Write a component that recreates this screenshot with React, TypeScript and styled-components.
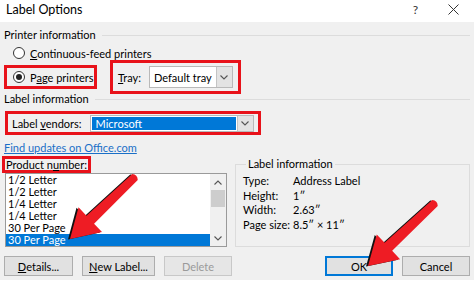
import styled, { createGlobalStyle } from "styled-components";

const GlobalStyle = createGlobalStyle`
  body {
    margin: 0;
    background: #fff;
    font-family: Lato, "Noto Sans", sans-serif;
    font-size: 11px;
    color: #000;
  }
`;

const products = [
  "1/2 Letter",
  "1/2 Letter",
  "1/4 Letter",
  "1/4 Letter",
  "30 Per Page",
  "30 Per Page",
];

const details = [
  ["Type:", "Address Label"],
  ["Height:", "1\u02BA"],
  ["Width:", "2.63\u02BA"],
  ["Page size:", "8.5\u02BA \u00D7 11\u02BA"],
];

// arrow drawn pointing right from the tail, then rotated into place
const arrowShape = (len: number) => {
  const h = 28;
  const w = 17;
  return `M0 -4 Q-3.5 0 0 4 L${len - h} 5.5 L${len - h} ${w} L${len} 0 L${len - h} ${-w} L${len - h} -5.5 Z`;
};

const Arrow = ({ x, y, tx, ty }: { x: number; y: number; tx: number; ty: number }) => {
  const len = Math.hypot(tx - x, ty - y);
  const angle = (Math.atan2(ty - y, tx - x) * 180) / Math.PI;
  const d = arrowShape(len);
  return (
    <g>
      <g transform="translate(-2 0.5)">
        <path d={d} fill="#111" transform={`translate(${x} ${y}) rotate(${angle})`} />
      </g>
      <path d={d} fill="#ee1c24" transform={`translate(${x} ${y}) rotate(${angle})`} />
    </g>
  );
};

const Chevron = ({ up }: { up?: boolean }) => (
  <svg width="8" height="5" viewBox="0 0 8 5">
    <polyline
      points={up ? "0.5,4.5 4,1 7.5,4.5" : "0.5,0.5 4,4 7.5,0.5"}
      fill="none"
      stroke="#555"
      strokeWidth="1.1"
    />
  </svg>
);

const App = () => {
  return (
    <Window>
      <GlobalStyle />
      <TitleBar>
        <Title>Label Options</Title>
        <TitleButtons>
          <Help>?</Help>
          <svg width="11" height="11" viewBox="0 0 11 11">
            <path d="M0.5 0.5 L10.5 10.5 M10.5 0.5 L0.5 10.5" stroke="#333" strokeWidth="1" />
          </svg>
        </TitleButtons>
      </TitleBar>

      <Body>
        <SectionHead>
          <span>Printer information</span>
          <Rule />
        </SectionHead>
        <RadioRow>
          <Radio />
          <span>
            <u>C</u>ontinuous-feed printers
          </span>
        </RadioRow>
        <PrinterRow>
          <RedBox $pad="0 6px" $height={24} $width={93}>
            <Radio $checked />
            <span>
              P<u>a</u>ge printers
            </span>
          </RedBox>
          <RedBox $pad="0 5px" $height={34} $gap={8}>
            <span>
              <u>T</u>ray:
            </span>
            <Select $width={84} $height={22}>
              <SelectText>Default tray</SelectText>
              <DropButton>
                <Chevron />
              </DropButton>
            </Select>
          </RedBox>
        </PrinterRow>

        <SectionHead $tight>
          <span>Label information</span>
          <Rule />
        </SectionHead>
        <VendorRow>
          <RedBox $pad="0 4px" $height={24} $gap={8}>
            <span>
              Label <u>v</u>endors:
            </span>
            <Select $width={164} $height={17}>
              <SelectText $selected>Microsoft</SelectText>
              <DropButton>
                <Chevron />
              </DropButton>
            </Select>
          </RedBox>
        </VendorRow>

        <Link>Find updates on Office.com</Link>

        <Lower>
          <div>
            <ProductLabel>
              Product n<u>u</u>mber:
            </ProductLabel>
            <ListBox>
              <Items>
                {products.map((p, i) => (
                  <Item key={i} $selected={i === products.length - 1}>
                    {p}
                  </Item>
                ))}
              </Items>
              <ScrollBar>
                <ScrollArrow>
                  <Chevron up />
                </ScrollArrow>
                <Thumb />
                <Track />
                <ScrollArrow>
                  <Chevron />
                </ScrollArrow>
              </ScrollBar>
            </ListBox>
          </div>
          <GroupBox>
            <Legend>Label information</Legend>
            <DetailGrid>
              {details.map(([k, v]) => (
                <DetailRow key={k}>
                  <span>{k}</span>
                  <span>{v}</span>
                </DetailRow>
              ))}
            </DetailGrid>
          </GroupBox>
        </Lower>

        <ButtonRow>
          <ButtonGroup>
            <Button $width={69}>
              <u>D</u>etails...
            </Button>
            <Button $width={73}>
              <u>N</u>ew Label...
            </Button>
            <Button $width={68} $disabled>
              Delete
            </Button>
          </ButtonGroup>
          <ButtonGroup>
            <Button $width={68} $primary>
              OK
            </Button>
            <Button $width={68}>Cancel</Button>
          </ButtonGroup>
        </ButtonRow>
      </Body>

      <Overlay width="474" height="285" viewBox="0 0 474 285">
        <Arrow x={135} y={177} tx={70} ty={239} />
        <Arrow x={435} y={203} tx={368} ty={266} />
      </Overlay>
    </Window>
  );
};

export default App;

const Window = styled.div`
  position: relative;
  width: 474px;
  height: 285px;
  overflow: hidden;
  background: #fff;
`;

const TitleBar = styled.div`
  height: 22px;
  display: flex;
  align-items: center;
  justify-content: space-between;
  padding: 0 15px 0 6px;
  background: #fff;
`;

const Title = styled.span`
  font-size: 12.5px;
  margin-top: -4px;
`;

const TitleButtons = styled.div`
  display: flex;
  align-items: center;
  gap: 30px;
  margin-top: -4px;
`;

const Help = styled.span`
  font-size: 12px;
  color: #333;
`;

const Body = styled.div`
  box-sizing: border-box;
  height: 258px;
  padding: 6px 4px 0 4px;
  background: #f0f0f0;
  display: flex;
  flex-direction: column;
  white-space: nowrap;
`;

const SectionHead = styled.div<{ $tight?: boolean }>`
  display: flex;
  align-items: center;
  gap: 6px;
  height: 14px;
  line-height: 14px;
  margin-top: ${(p) => (p.$tight ? "-2px" : "0")};
`;

const Rule = styled.div`
  flex: 1;
  height: 1px;
  background: #dcdcdc;
`;

const RadioRow = styled.div`
  display: flex;
  align-items: center;
  gap: 5px;
  height: 14px;
  margin-top: 4px;
  padding-left: 9px;
`;

const Radio = styled.span<{ $checked?: boolean }>`
  box-sizing: border-box;
  flex: none;
  width: 12px;
  height: 12px;
  border-radius: 50%;
  border: 1px solid #333;
  background: #fff;
  display: inline-flex;
  align-items: center;
  justify-content: center;
  &::after {
    content: "";
    width: 6px;
    height: 6px;
    border-radius: 50%;
    background: ${(p) => (p.$checked ? "#222" : "transparent")};
  }
`;

const PrinterRow = styled.div`
  display: flex;
  align-items: center;
  gap: 13px;
`;

const RedBox = styled.div<{ $pad: string; $height: number; $gap?: number; $width?: number }>`
  box-sizing: border-box;
  display: flex;
  align-items: center;
  gap: ${(p) => p.$gap ?? 5}px;
  height: ${(p) => p.$height}px;
  ${(p) => (p.$width ? `width: ${p.$width}px;` : "")}
  padding: ${(p) => p.$pad};
  border: 3px solid #e8121a;
`;

const Select = styled.div<{ $width: number; $height: number }>`
  box-sizing: border-box;
  width: ${(p) => p.$width}px;
  height: ${(p) => p.$height}px;
  display: flex;
  align-items: stretch;
  background: #fff;
  border: 1px solid #b9b9b9;
`;

const SelectText = styled.span<{ $selected?: boolean }>`
  flex: 1;
  display: flex;
  align-items: center;
  padding-left: 4px;
  margin: ${(p) => (p.$selected ? "1px" : "0")};
  background: ${(p) => (p.$selected ? "#0078d7" : "transparent")};
  color: ${(p) => (p.$selected ? "#fff" : "#000")};
`;

const DropButton = styled.span`
  width: 15px;
  display: flex;
  align-items: center;
  justify-content: center;
  background: #e3e3e3;
  border-left: 1px solid #c4c4c4;
`;

const VendorRow = styled.div`
  display: flex;
  margin-top: 5px;
  padding-left: 1px;
`;

const Link = styled.span`
  margin-top: 6px;
  height: 14px;
  line-height: 14px;
  color: #1a6fc7;
  text-decoration: underline;
  align-self: flex-start;
`;

const Lower = styled.div`
  display: grid;
  grid-template-columns: 223px 1fr;
  gap: 8px;
  margin-top: 1px;
`;

const ProductLabel = styled.div`
  box-sizing: border-box;
  height: 17px;
  width: 89px;
  margin-left: -2px;
  border: 3px solid #e8121a;
  display: flex;
  align-items: center;
  padding-left: 1px;
`;

const ListBox = styled.div`
  box-sizing: border-box;
  margin-left: 1px;
  height: 74px;
  display: flex;
  background: #fff;
  border: 1px solid #9a9a9a;
`;

const Items = styled.div`
  flex: 1;
  display: flex;
  flex-direction: column;
`;

const Item = styled.div<{ $selected?: boolean }>`
  height: 12px;
  line-height: 12px;
  padding-left: 2px;
  background: ${(p) => (p.$selected ? "#0078d7" : "transparent")};
  color: ${(p) => (p.$selected ? "#fff" : "#000")};
`;

const ScrollBar = styled.div`
  width: 16px;
  display: flex;
  flex-direction: column;
  background: #f0f0f0;
`;

const ScrollArrow = styled.div`
  height: 16px;
  display: flex;
  align-items: center;
  justify-content: center;
`;

const Thumb = styled.div`
  height: 17px;
  margin: 0 1px;
  background: #cdcdcd;
`;

const Track = styled.div`
  flex: 1;
`;

const GroupBox = styled.fieldset`
  margin: 1px 0 0 0;
  padding: 3px 0 6px 7px;
  border: 1px solid #dcdcdc;
  min-width: 0;
`;

const Legend = styled.legend`
  padding: 0 2px;
  margin-left: 3px;
  line-height: 14px;
`;

const DetailGrid = styled.div`
  display: flex;
  flex-direction: column;
`;

const DetailRow = styled.div`
  display: grid;
  grid-template-columns: 50px 1fr;
  height: 14.5px;
  line-height: 14.5px;
`;

const ButtonRow = styled.div`
  display: flex;
  justify-content: space-between;
  margin-top: 9px;
`;

const ButtonGroup = styled.div`
  display: flex;
  gap: 9px;
`;

const Button = styled.div<{ $width: number; $primary?: boolean; $disabled?: boolean }>`
  box-sizing: border-box;
  width: ${(p) => p.$width}px;
  height: 20px;
  display: flex;
  align-items: center;
  justify-content: center;
  background: ${(p) => (p.$disabled ? "#e6e6e6" : "#e1e1e1")};
  border: ${(p) => (p.$primary ? "2px solid #0078d7" : p.$disabled ? "1px solid #c8c8c8" : "1px solid #adadad")};
  color: ${(p) => (p.$disabled ? "#9a9a9a" : "#000")};
`;

const Overlay = styled.svg`
  position: absolute;
  left: 0;
  top: 0;
  pointer-events: none;
`;
